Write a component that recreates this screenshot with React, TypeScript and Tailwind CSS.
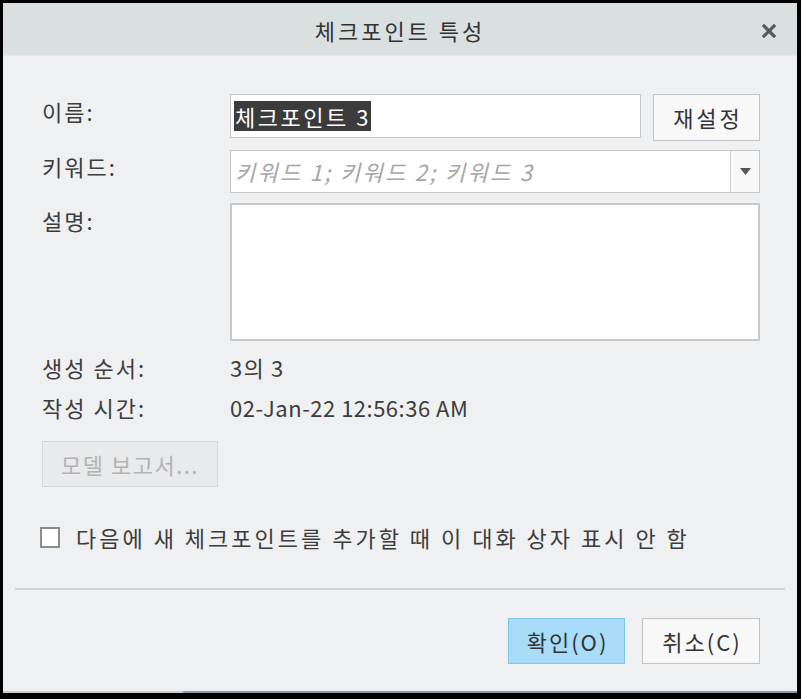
const font = "font-['Noto_Sans_CJK_KR','Noto_Sans',sans-serif]";

function Label({ children }: { children: React.ReactNode }) {
  return (
    <div className="w-[188px] shrink-0 text-[22px] leading-[26px] tracking-[2px] text-[#3c3c3c]">{children}</div>
  );
}

export default function App() {
  return (
    <div className={`w-[801px] h-[699px] bg-black pl-[3px] pt-[3px] pr-[4px] pb-[6px] ${font}`}>
      <div className="flex h-full flex-col bg-[#eff0f2]">
        {/* title bar */}
        <div className="relative flex h-[53px] shrink-0 items-center justify-center border-b border-[#e4e7e8] bg-[#dadfe0] pt-[3px]">
          <span className="text-[22px] tracking-[3px] text-[#333]">체크포인트 특성</span>
          <svg className="absolute right-[21px] top-[21px]" width="14" height="14" viewBox="0 0 14 14">
            <path d="M2 2L12 12M12 2L2 12" stroke="#5a5a5a" strokeWidth="3.2" strokeLinecap="square" />
          </svg>
        </div>

        {/* fields */}
        <div className="pl-[39px] pr-[37px] pt-[38px]">
          <div className="flex h-[47px] items-start">
            <div className="pt-[4px]">
              <Label>이름:</Label>
            </div>
            <div className="flex h-[44px] flex-1 items-center border border-[#c6c6c6] bg-white px-[3px]">
              <span className="bg-[#3b3b3b] pl-[1px] text-[22px] leading-[30px] tracking-[2.5px] text-white">
                체크포인트 3
              </span>
            </div>
            <button className="ml-[12px] h-[47px] w-[107px] border border-[#c3c3c3] bg-[#f8f8f8] pl-[3px] text-[22px] tracking-[3px] text-[#333]">
              재설정
            </button>
          </div>

          <div className="mt-[9px] flex h-[43px] items-start">
            <div className="pt-[3px]">
              <Label>키워드:</Label>
            </div>
            <div className="flex h-[43px] flex-1 border border-[#c6c6c6] bg-white">
              <div className="flex flex-1 items-center px-[4px] text-[22px] italic tracking-[2.3px] text-[#a6a6a6]">
                키워드 1; 키워드 2; 키워드 3
              </div>
              <div className="flex w-[29px] items-center justify-center border-l border-[#d4d4d4] bg-[#f8f8f8]">
                <svg width="11" height="7" viewBox="0 0 11 7">
                  <path d="M0 0H11L5.5 7Z" fill="#555" />
                </svg>
              </div>
            </div>
          </div>

          <div className="mt-[10px] flex h-[138px] items-start">
            <div className="pt-[4px]">
              <Label>설명:</Label>
            </div>
            <div className="h-[138px] flex-1 border-2 border-[#c8c8c8] bg-white" />
          </div>

          <div className="mt-[13px] flex h-[26px] items-center">
            <Label>생성 순서:</Label>
            <span className="text-[22px] leading-[26px] tracking-[1.2px] text-[#3c3c3c]">3의 3</span>
          </div>

          <div className="mt-[14px] flex h-[26px] items-center">
            <Label>작성 시간:</Label>
            <span className="text-[22px] leading-[26px] tracking-[0.5px] text-[#3c3c3c]">02-Jan-22 12:56:36 AM</span>
          </div>

          <button
            disabled
            className="mt-[21px] h-[46px] w-[176px] border border-[#d5d6d8] bg-[#e9eaec] text-[22px] tracking-[1.5px] text-[#b3b3b3]"
          >
            모델 보고서...
          </button>

          <label className="mt-[37px] flex h-[26px] items-center">
            <div className="ml-[-2px] h-[21px] w-[20px] shrink-0 border-2 border-[#8c8c8c] bg-white" />
            <span className="ml-[16px] text-[22px] tracking-[3px] text-[#3c3c3c]">
              다음에 새 체크포인트를 추가할 때 이 대화 상자 표시 안 함
            </span>
          </label>
        </div>

        <div className="mx-[12px] mt-[38px] h-[2px] bg-[#d3d4d6]" />

        <div className="flex flex-1 items-start justify-end gap-[17px] pr-[37px] pt-[28px]">
          <button className="h-[46px] w-[117px] border border-[#7cc6ee] bg-[#a8dcf9] pl-[2px] text-[22px] tracking-[2px] text-[#333]">
            확인(O)
          </button>
          <button className="h-[46px] w-[118px] border border-[#c3c3c3] bg-[#f8f8f8] pl-[2px] text-[22px] tracking-[2px] text-[#333]">
            취소(C)
          </button>
        </div>

        <div className="flex h-[2px] shrink-0">
          <div className="w-[180px] bg-[#c9ccd0]" />
          <div className="flex-1 bg-[#8c99aa]" />
        </div>
      </div>
    </div>
  );
}
